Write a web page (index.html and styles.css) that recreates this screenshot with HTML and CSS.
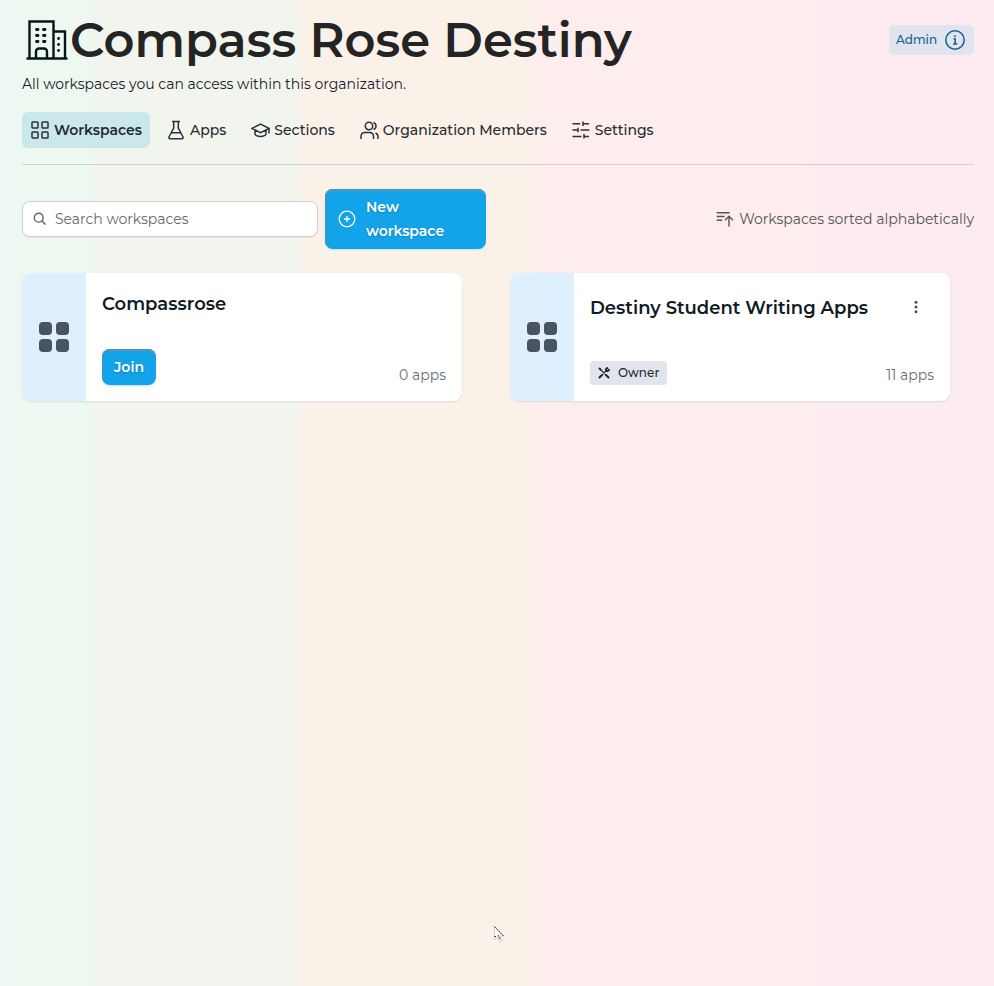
FILE: index.html
```html
<!DOCTYPE html>
<html lang="en">
<head>
<meta charset="utf-8">
<title>Compass Rose Destiny</title>
<link rel="stylesheet" href="styles.css">
</head>
<body>
<div class="page">
  <header class="header">
    <h1 class="title">
      <svg class="building" viewBox="0 0 42 42" fill="none" stroke="#07141c" stroke-width="2.4"><path d="M.5 39.500h41M3.500 39V2.500h24V39M27.500 12.500h11.500V39M10 39v-6.500a3 3 0 0 1 3-3h5a3 3 0 0 1 3 3V39"/><path stroke-width="2.800" stroke-linecap="round" d="M10.500 10.500h1.500M17.500 10.500h1.500M10.500 16.500h1.500M17.500 16.500h1.500M10.500 22.500h1.500M17.500 22.500h1.500"/><path stroke-width="2.800" stroke-linecap="round" d="M32.500 19.500h.1M32.500 25.500h.1M32.500 31.500h.1"/></svg>
      <span>Compass Rose Destiny</span>
    </h1>
    <div class="admin"><span>Admin</span>
      <svg width="20" height="20" viewBox="0 0 20 20" fill="none" stroke="#155f94" stroke-width="1.500"><circle cx="10" cy="10" r="9.200"/><path d="M8.500 9h1.700v5M8 14h4.200"/><circle cx="10" cy="6.200" r=".6" fill="#155f94" stroke-width=".8"/></svg>
    </div>
  </header>
  <p class="subtitle">All workspaces you can access within this organization.</p>
  <nav class="tabs">
    <a class="tab active"><svg width="18" height="18" viewBox="0 0 18 18"><rect x="1" y="1" width="6" height="6" rx=".8"/><rect x="11" y="1" width="6" height="6" rx=".8"/><rect x="1" y="11" width="6" height="6" rx=".8"/><rect x="11" y="11" width="6" height="6" rx=".8"/></svg><span>Workspaces</span></a>
    <a class="tab apps"><svg width="16" height="20" viewBox="0 0 16 20"><path d="M4 1.500h8M5.700 1.500V8L1 17q-.6 1.700 1.200 1.700h11.600q1.800 0 1.200-1.700L10.300 8V1.500M3.500 12.800h9"/></svg><span>Apps</span></a>
    <a class="tab sections"><svg width="19" height="16" viewBox="0 0 19 16"><path d="M1 6.300 9.500 2 18 6.300 9.500 10.600zM4 8v4q0 .8 1 1.300 4.500 2.300 9 0 1-.5 1-1.300V8M18 6.300V11.500"/></svg><span>Sections</span></a>
    <a class="tab members"><svg width="19" height="19" viewBox="0 0 19 19"><circle cx="9" cy="5" r="3.700"/><path d="M1 18v-2.500q0-4 4-4h4.500q4 0 4 4V18M13.500 1.500Q16 2.500 16 5t-2.500 3.500M15.500 12q2.500 1 2.500 3.800V18"/></svg><span>Organization Members</span></a>
    <a class="tab settings"><svg width="18" height="18" viewBox="0 0 18 18"><path d="M.5 2.700h7.800M11 .5v4.500M11 2.700h6M.5 9h5M6 6.800v4.500M8.500 9h9M.5 15.500h9M12 13v4.500M12 15.500h5"/></svg><span>Settings</span></a>
  </nav>
  <section class="toolbar">
    <label class="search"><svg width="14" height="14" viewBox="0 0 14 14" fill="none" stroke="#5c6166" stroke-width="1.400"><circle cx="5.700" cy="5.700" r="4.400"/><path d="m8.900 8.900 3.600 3.600"/></svg><input type="text" placeholder="Search workspaces"></label>
    <button class="btn new"><svg width="18" height="18" viewBox="0 0 18 18" fill="none" stroke="#fff" stroke-width="1.300"><circle cx="9" cy="9" r="7.800"/><path d="M9 6v6M6 9h6"/></svg><span>New workspace</span></button>
    <div class="sort"><svg width="18" height="16" viewBox="0 0 18 16" fill="none" stroke="#51565b" stroke-width="1.400"><path d="M.7 1.700h13M.7 5.500h8M.7 9.200h5.500M13 15.500V5.500M9 9.200l4-4 4 4"/></svg><span>Workspaces sorted alphabetically</span></div>
  </section>
  <main class="grid">
    <article class="card">
      <div class="thumb"><i></i><i></i><i></i><i></i></div>
      <div class="body">
        <h2>Compassrose</h2>
        <div class="foot"><button class="btn join">Join</button><span class="count">0 apps</span></div>
      </div>
    </article>
    <article class="card">
      <div class="thumb"><i></i><i></i><i></i><i></i></div>
      <div class="body">
        <div class="head"><h2>Destiny Student Writing Apps</h2><svg class="dots" width="4" height="14" viewBox="0 0 4 14" fill="#4b5055"><circle cx="2" cy="2.300" r="1.500"/><circle cx="2" cy="7" r="1.500"/><circle cx="2" cy="11.700" r="1.500"/></svg></div>
        <div class="foot"><span class="owner"><svg width="12" height="12" viewBox="0 0 12 12" fill="none" stroke="#252b31" stroke-linecap="round"><path stroke-width="2" d="M1.500 1.500 2.600 2.600M8 8 10.500 10.500"/><path stroke-width="1.200" d="M2 2 8 8M4.500 7.500 7.500 4.500"/><path stroke-width="2.100" d="M1.500 10.500 4 8M10.900 2.900Q10.300 4.400 8.300 3.800 7.200 2 9.200 1.100"/></svg>Owner</span><span class="count">11 apps</span></div>
      </div>
    </article>
  </main>
</div>
<svg class="cursor" width="14" height="20" viewBox="0 0 14 20"><path d="M1.500 1.500v13l3-2.600 2.200 4.800 2.200-1-2.100-4.600h3.700z" fill="#fff" stroke="#c9c2bd" stroke-width=".8"/><path d="m1.500 1.500 9 9.600M1.500 11.500h1.500M5 10l2.500 5" fill="none" stroke="#222" stroke-width="1" stroke-dasharray="1.800 1"/></svg>
</body>
</html>
```
FILE: styles.css
```css
* { box-sizing: border-box; }
body {
  margin: 0;
  min-height: 986px;
  font-family: Montserrat, Inter, sans-serif;
  font-size: 14px;
  line-height: 24px;
  color: #252b31;
  background: linear-gradient(90deg, #edf7f4 0 19px, #edf8f0 19px 94px, #f2f5ed 94px 300px, #faf2e8 300px 533px, #fdeded 533px 813px, #fcebf0 813px);
}
.page { padding: 12px 20px 0 22px; }
svg { display: block; flex: none; }
h1, h2, p { margin: 0; }
.header { display: flex; justify-content: space-between; align-items: center; height: 56px; }
.title { display: flex; align-items: center; gap: 2px; padding-left: 4px; font-size: 48px; font-weight: 600; line-height: 56px; color: #242424; white-space: nowrap; }
.building { width: 42px; height: 42px; }
.admin { display: flex; align-items: center; justify-content: space-between; width: 85px; height: 30px; padding: 0 9px 0 7px; border-radius: 5px; background: #dfe4ee; color: #155f94; font-size: 12px; font-weight: 500; }
.subtitle { margin-top: 4px; color: #17202a; }
.tabs { display: flex; margin-top: 16px; padding-bottom: 16px; border-bottom: 1px solid #d2d4d3; font-weight: 500; }
.tab { display: flex; align-items: center; height: 36px; padding: 0 8px; border-radius: 6px; gap: 4px; }
.tab svg { fill: none; stroke: #29333b; stroke-width: 1.5; }
.active { width: 128px; padding-left: 9px; gap: 5px; background: #cae7ec; font-weight: 600; }
.apps { margin-left: 10px; gap: 6px; }
.sections { margin-left: 9px; }
.members { margin-left: 9px; }
.settings { margin-left: 9px; gap: 5px; }
.toolbar { display: flex; align-items: center; margin-top: 24px; height: 60px; }
.search { display: flex; align-items: center; gap: 8px; width: 296px; height: 36px; padding: 0 10px; border: 1px solid #cfd1d1; border-radius: 8px; background: #fff; box-shadow: 0 1px 1px #0001; }
.search input { flex: 1; min-width: 0; padding: 0; border: 0; outline: 0; background: none; font: inherit; }
.search input::placeholder { color: #66696d; opacity: 1; }
.btn { border: 0; border-radius: 8px; background: #12a3e9; color: #fff; font: 600 14px/24px Montserrat, Inter, sans-serif; text-shadow: 0 1px 2px #0003; box-shadow: inset 1px 1px 1px #548fae, inset 0 2px 1px #4b9ec8, 0 1px 2px #b8e4f5; }
.new { display: flex; align-items: center; gap: 10px; width: 161px; height: 60px; margin-left: 7px; padding: 0 36px 0 13px; text-align: left; }
.sort { display: flex; align-items: center; gap: 5px; margin-left: auto; color: #51565b; }
.grid { display: grid; grid-template-columns: 440px 440px; gap: 48px; margin-top: 24px; }
.card { display: flex; height: 128px; border-radius: 9px; background: #fff; box-shadow: 0 1px 2px #00000018; overflow: hidden; }
.thumb { display: grid; grid-template-columns: 13px 13px; grid-auto-rows: 13px; gap: 4.5px; place-content: center; width: 64px; background: #def0fe; }
.thumb i { border-radius: 4px; background: #495461; }
.body { display: flex; flex: 1; flex-direction: column; justify-content: space-between; padding: 16px; }
h2 { padding-top: 1px; font-size: 18px; font-weight: 600; line-height: 28px; color: #111b24; }
.head { display: flex; align-items: center; justify-content: space-between; height: 36px; padding-right: 16px; }
.foot { display: flex; align-items: flex-end; justify-content: space-between; }
.join { width: 54px; height: 36px; padding: 0; }
.count { margin-bottom: -2px; color: #696e75; }
.owner { display: flex; align-items: center; gap: 8px; height: 24px; padding: 0 8px; border-radius: 4px; background: #e1e4ea; font-size: 12px; font-weight: 500; }
.cursor { position: absolute; left: 493px; top: 925px; }
```
